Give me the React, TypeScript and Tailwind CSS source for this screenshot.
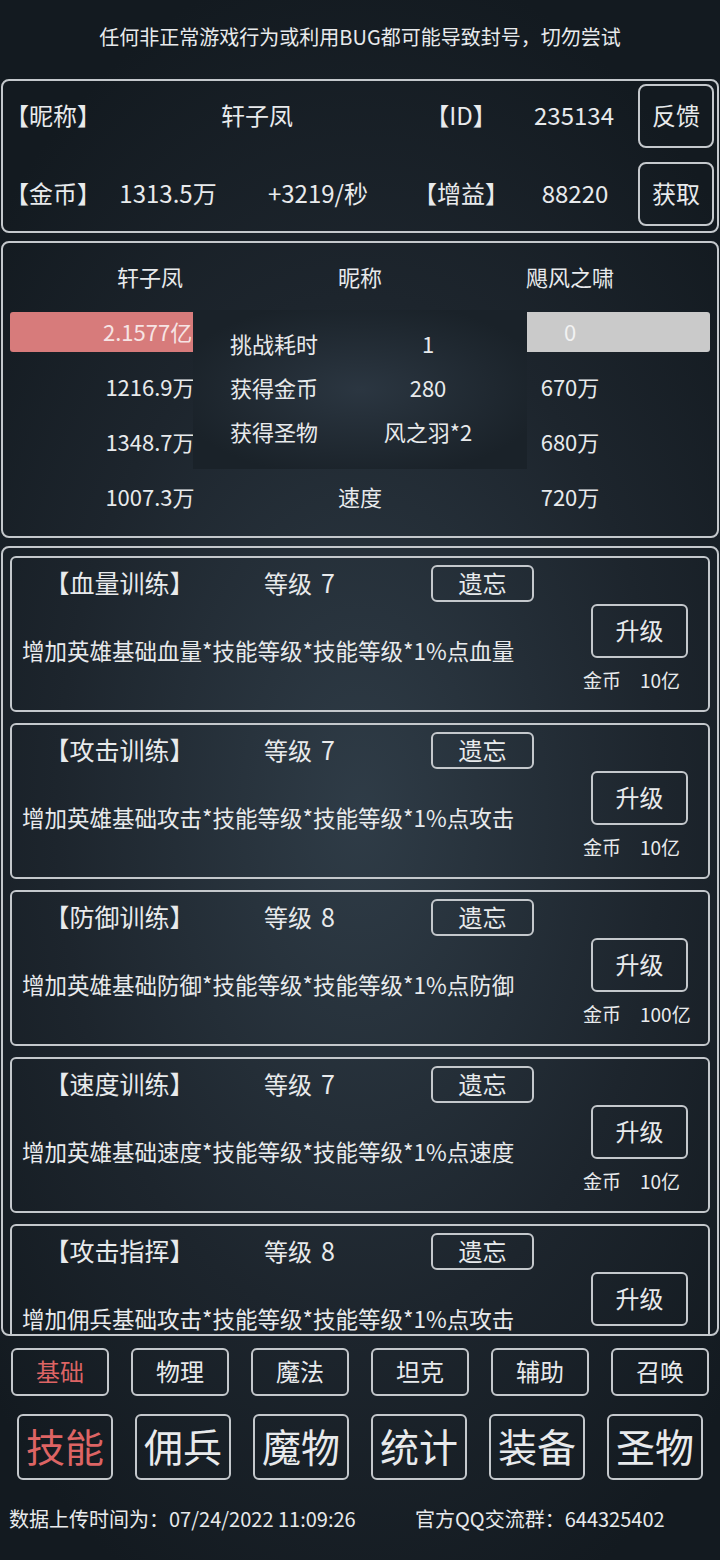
import React from 'react'

const skills = [
  { name: '【血量训练】', level: 7, desc: '增加英雄基础血量*技能等级*技能等级*1%点血量', cost: '10亿' },
  { name: '【攻击训练】', level: 7, desc: '增加英雄基础攻击*技能等级*技能等级*1%点攻击', cost: '10亿' },
  { name: '【防御训练】', level: 8, desc: '增加英雄基础防御*技能等级*技能等级*1%点防御', cost: '100亿' },
  { name: '【速度训练】', level: 7, desc: '增加英雄基础速度*技能等级*技能等级*1%点速度', cost: '10亿' },
  // last one is clipped by the list, its cost row is out of view
  { name: '【攻击指挥】', level: 8, desc: '增加佣兵基础攻击*技能等级*技能等级*1%点攻击', cost: '' },
]

const stats = [
  { left: '1216.9万', mid: '攻击', right: '670万' },
  { left: '1348.7万', mid: '防御', right: '680万' },
  { left: '1007.3万', mid: '速度', right: '720万' },
]

const subTabs = ['基础', '物理', '魔法', '坦克', '辅助', '召唤']
const mainTabs = ['技能', '佣兵', '魔物', '统计', '装备', '圣物']

function SkillCard({ skill }: { skill: typeof skills[number] }) {
  return (
    <div className="flex h-[156px] shrink-0 rounded-[6px] border-2 border-[#c4c8cc]">
      <div className="flex w-[579px] flex-col pt-[7px]">
        <div className="flex h-[37px] items-center text-[24px]">
          <div className="w-[215px] pb-[2px] text-center text-[25px]">{skill.name}</div>
          <div className="w-[204px] pb-[2px] pl-[37px]">
            等级<span className="ml-[9px] text-[25px]">{skill.level}</span>
          </div>
          <div className="flex h-[37px] w-[103px] items-center justify-center rounded-[6px] border-2 border-[#c4c8cc] pb-[2px]">
            遗忘
          </div>
        </div>
        <div className="mt-[33px] pl-[10px] text-[22.5px] leading-[30px] whitespace-nowrap">{skill.desc}</div>
      </div>
      <div className="flex w-[97px] flex-col pt-[46px]">
        <div className="flex h-[54px] items-center justify-center rounded-[6px] border-2 border-[#c4c8cc] pb-[2px] text-[24px]">
          升级
        </div>
        {skill.cost && (
          <div className="-ml-[8px] mt-[10px] flex gap-[19px] text-[19px] leading-[24px] whitespace-nowrap">
            <span>金币</span>
            <span>{skill.cost}</span>
          </div>
        )}
      </div>
    </div>
  )
}

export default function App() {
  return (
    <div
      className="flex h-[1560px] w-[720px] flex-col overflow-hidden bg-[radial-gradient(ellipse_70%_55%_at_50%_52%,#2f3c47_0%,#1d252d_60%,#131a20_100%)] text-[#e8eaec]"
      style={{ fontFamily: '"Noto Sans CJK SC", "Noto Sans", sans-serif' }}
    >
      {/* notice */}
      <div className="flex h-[79px] shrink-0 items-center justify-center pb-[5px] text-[20px]">
        任何非正常游戏行为或利用BUG都可能导致封号，切勿尝试
      </div>

      {/* player info */}
      <div className="mx-[1px] flex h-[154px] shrink-0 flex-col gap-[14px] rounded-[8px] border-2 border-[#c4c8cc] py-[3px] pl-[1px] pr-[2px] text-[24px]">
        <div className="flex h-[64px] items-center">
          <div className="w-[98px] pb-[2px] text-center">【昵称】</div>
          <div className="w-[310px] pb-[2px] text-center">轩子凤</div>
          <div className="w-[98px] pb-[2px] text-center">【ID】</div>
          <div className="w-[128px] pb-[2px] text-center">235134</div>
          <div className="flex h-[64px] w-[76px] items-center justify-center rounded-[8px] border-2 border-[#c4c8cc] pb-[2px]">
            反馈
          </div>
        </div>
        <div className="flex h-[64px] items-center">
          <div className="w-[98px] pb-[3px] text-center">【金币】</div>
          <div className="w-[132px] pb-[3px] text-center">1313.5万</div>
          <div className="w-[168px] pb-[3px] text-center">+3219/秒</div>
          <div className="w-[118px] pb-[3px] text-center">【增益】</div>
          <div className="w-[110px] pb-[3px] text-center">88220</div>
          <div className="ml-[8px] flex h-[64px] w-[76px] items-center justify-center rounded-[8px] border-2 border-[#c4c8cc] pb-[2px]">
            获取
          </div>
        </div>
      </div>

      {/* battle */}
      <div className="relative mx-[1px] mt-[8px] flex h-[297px] shrink-0 flex-col rounded-[8px] border-2 border-[#c4c8cc] pt-[11px] text-[22px]">
        <div className="grid h-[44px] grid-cols-[210px_210px_210px] items-center pl-[42px] text-center">
          <div>轩子凤</div>
          <div>昵称</div>
          <div>飓风之啸</div>
        </div>
        <div className="mt-[14px] flex h-[40px] gap-[12px] px-[7px]">
          <div className="flex w-[345px] items-center rounded-[3px] bg-[#d77b7b] pb-[2px] pl-[93px] text-[#f6e4e4]">2.1577亿</div>
          <div className="flex flex-1 items-center rounded-[3px] bg-[#cacaca] pb-[2px] pl-[197px] text-[#f2f2f2]">0</div>
        </div>
        <div className="mt-[7px] flex flex-col">
          {stats.map((s) => (
            <div key={s.mid} className="grid h-[55px] grid-cols-[210px_210px_210px] items-center pl-[42px] text-center">
              <div>{s.left}</div>
              <div>{s.mid}</div>
              <div>{s.right}</div>
            </div>
          ))}
        </div>

        {/* result popup */}
        <div className="absolute left-[190px] top-[67px] h-[159px] w-[334px] bg-[radial-gradient(ellipse_at_center,#2b3641_0%,#1a2229_80%)] pt-[11px]">
          {[
            ['挑战耗时', '1'],
            ['获得金币', '280'],
            ['获得圣物', '风之羽*2'],
          ].map(([k, v]) => (
            <div key={k} className="grid h-[44px] grid-cols-[136px_198px] items-center">
              <div className="pl-[37px]">{k}</div>
              <div className="text-center">{v}</div>
            </div>
          ))}
        </div>
      </div>

      {/* skills list */}
      <div className="mx-[1px] mt-[8px] flex h-[790px] shrink-0 flex-col gap-[11px] overflow-hidden rounded-[8px] border-2 border-[#c4c8cc] px-[7px] pt-[8px]">
        {skills.map((s) => (
          <SkillCard key={s.name} skill={s} />
        ))}
      </div>

      {/* sub tabs */}
      <div className="mt-[12px] flex shrink-0 gap-[22px] pl-[11px]">
        {subTabs.map((t, i) => (
          <div
            key={t}
            className={
              'flex h-[48px] w-[98px] items-center justify-center rounded-[6px] border-2 border-[#c4c8cc] pb-[2px] text-[24px] ' +
              (i === 0 ? 'text-[#dd6464]' : '')
            }
          >
            {t}
          </div>
        ))}
      </div>

      {/* main tabs */}
      <div className="mt-[18px] flex shrink-0 gap-[22px] pl-[17px]">
        {mainTabs.map((t, i) => (
          <div
            key={t}
            className={
              'flex h-[66px] w-[96px] items-center justify-center rounded-[6px] border-2 border-[#c4c8cc] pb-[3px] text-[39px] ' +
              (i === 0 ? 'text-[#dd6464]' : '')
            }
          >
            {t}
          </div>
        ))}
      </div>

      {/* footer */}
      <div className="mt-[26px] flex shrink-0 text-[20px] leading-[26px] whitespace-nowrap">
        <div className="w-[415px] pl-[9px]">数据上传时间为：07/24/2022 11:09:26</div>
        <div>官方QQ交流群：644325402</div>
      </div>
    </div>
  )
}
